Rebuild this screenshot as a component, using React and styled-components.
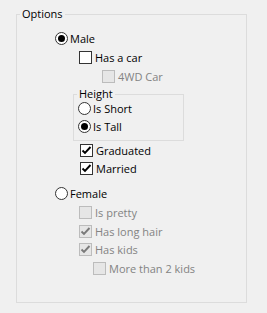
import React from "react";
import styled, { createGlobalStyle, css } from "styled-components";

const GlobalStyle = createGlobalStyle`
  html, body {
    margin: 0;
    padding: 0;
    background: #f0f0f0;
  }
  body {
    font-family: "Open Sans", "Liberation Sans", sans-serif;
    font-size: 11px;
    color: #000;
  }
`;

const Page = styled.div`
  width: 267px;
  height: 313px;
  padding-top: 7px;
  box-sizing: border-box;
`;

const GroupBox = styled.fieldset`
  margin: ${(p) => p.$top || 0}px 0 0 ${(p) => p.$left || 0}px;
  padding: 0;
  width: ${(p) => p.$width}px;
  height: ${(p) => p.$height}px;
  box-sizing: border-box;
  border: 1px solid #dcdcdc;
  border-radius: 0;
  min-width: 0;
`;

const Legend = styled.legend`
  margin-left: 3px;
  padding: 0 2px;
  line-height: 14px;
  height: 14px;
  font-size: 11px;
`;

const Column = styled.div`
  margin-top: ${(p) => p.$top || 0}px;
  padding-left: ${(p) => p.$left || 0}px;
`;

const Row = styled.label`
  display: flex;
  align-items: center;
  height: 19px;
  margin-left: ${(p) => p.$indent || 0}px;
  margin-top: ${(p) => p.$gap || 0}px;
  color: ${(p) => (p.$disabled ? "#838383" : "#000")};
  white-space: nowrap;
`;

const Box = styled.span`
  width: 13px;
  height: 13px;
  box-sizing: border-box;
  flex: none;
  display: inline-flex;
  align-items: center;
  justify-content: center;
  margin-right: 3px;
  border: 1px solid ${(p) => (p.$disabled ? "#bcbcbc" : "#333333")};
  background: ${(p) => (p.$disabled ? "#e6e6e6" : "#ffffff")};
  ${(p) =>
    p.$round &&
    css`
      border-radius: 50%;
      margin-right: 2px;
    `}
`;

const Dot = styled.span`
  width: 7px;
  height: 7px;
  border-radius: 50%;
  background: #000;
`;

function CheckMark({ disabled }) {
  return (
    <svg width="11" height="11" viewBox="0 0 11 11">
      <path
        d="M1.5 5.5 L4 8 L9.5 2"
        fill="none"
        stroke={disabled ? "#7a7a7a" : "#000"}
        strokeWidth="1.9"
      />
    </svg>
  );
}

function Check({ label, checked, disabled, indent, gap }) {
  return (
    <Row $indent={indent} $gap={gap} $disabled={disabled}>
      <Box $disabled={disabled}>{checked && <CheckMark disabled={disabled} />}</Box>
      {label}
    </Row>
  );
}

function Radio({ label, checked, indent, gap }) {
  return (
    <Row $indent={indent} $gap={gap}>
      <Box $round>{checked && <Dot />}</Box>
      {label}
    </Row>
  );
}

export default function App() {
  return (
    <Page>
      <GlobalStyle />
      <GroupBox $left={16} $width={231} $height={296}>
        <Legend>Options</Legend>
        <Column $top={8} $left={38}>
          <Radio label="Male" checked />
          <Check label="Has a car" indent={24} />
          <Check label="4WD Car" indent={47} disabled />
          <GroupBox $left={18} $width={111} $height={54} $top={1}>
            <Legend>Height</Legend>
            <Column $top={-2} $left={4}>
              <Radio label="Is Short" />
              <Radio label="Is Tall" checked gap={-1} />
            </Column>
          </GroupBox>
          <Check label="Graduated" indent={25} checked />
          <Check label="Married" indent={25} checked gap={-1} />
          <Radio label="Female" gap={6} />
          <Check label="Is pretty" indent={24} disabled />
          <Check label="Has long hair" indent={24} checked disabled />
          <Check label="Has kids" indent={24} checked disabled gap={-1} />
          <Check label="More than 2 kids" indent={38} disabled />
        </Column>
      </GroupBox>
    </Page>
  );
}
